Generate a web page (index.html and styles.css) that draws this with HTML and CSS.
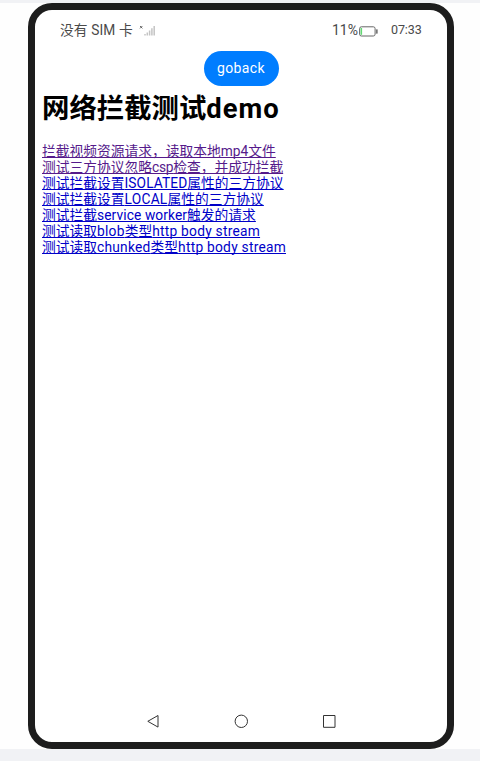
FILE: index.html
```html
<!DOCTYPE html>
<html lang="zh-CN">
<head>
<meta charset="utf-8">
<title>网络拦截测试demo</title>
<link rel="stylesheet" href="styles.css">
</head>
<body>
<main class="stage">
  <div class="phone">
    <header class="status">
      <span class="carrier">没有 SIM 卡</span>
      <svg class="signal" width="17" height="12" viewBox="0 0 17 12">
        <path d="M1 1l2.400 2.400M3.400 1L1 3.400" stroke="#555" stroke-width=".9"/>
        <path d="M6 9v1.500M8.300 7.500v3M10.600 5.500v5M12.900 3.300v7.200M15.200 1v9.500" stroke="#c4c4c4" stroke-width="1.500"/>
      </svg>
      <span class="percent">11%</span>
      <svg class="battery" width="20" height="11" viewBox="0 0 20 11">
        <rect x=".6" y=".8" width="15.500" height="9.200" rx="1.800" fill="none" stroke="#666" stroke-width="1"/>
        <rect x="1.500" y="2" width="1.600" height="6.800" fill="#62d873"/>
        <rect x="17" y="3.200" width="1.700" height="4.500" rx=".6" fill="#777"/>
      </svg>
      <time class="clock">07:33</time>
    </header>
    <button class="goback">goback</button>
    <section class="page">
      <h1>网络拦截测试<span class="title-latin">demo</span></h1>
      <nav class="links">
        <a class="visited">拦截视频资源请求，读取本地mp4文件</a>
        <a class="visited">测试三方协议忽略<span class="csp">csp</span>检查，并成功拦截</a>
        <a>测试拦截设置<span class="worker">ISOLATED</span>属性的三方协议</a>
        <a>测试拦截设置<span class="wide">LOCAL</span>属性的三方协议</a>
        <a>测试拦截<span class="worker">service worker</span>触发的请求</a>
        <a>测试读取<span class="wide">blob</span>类型<span class="wide">http body stream</span></a>
        <a>测试读取<span class="wide">chunked</span>类型<span class="wide">http body stream</span></a>
      </nav>
    </section>
    <footer class="navbar">
      <svg width="14" height="14" viewBox="0 0 14 14"><path d="M1.800 7.300L12 1.500V13.100Z"/></svg>
      <svg width="14" height="14" viewBox="0 0 14 14"><circle cx="7.300" cy="7.300" r="6.200"/></svg>
      <svg width="14" height="14" viewBox="0 0 14 14"><path d="M1.500 1.500H13V13.300H1.500Z"/></svg>
    </footer>
  </div>
</main>
</body>
</html>
```
FILE: styles.css
```css
* { box-sizing: border-box; }
body {
  margin: 0;
  height: 761px;
  padding: 3px 0 12px;
  background: #f1f2f5;
  font-family: Roboto, "Noto Sans CJK SC", sans-serif;
}
.stage { height: 746px; padding-left: 28px; background: #fefefe; }
.phone {
  width: 426px;
  height: 746px;
  display: flex;
  flex-direction: column;
  border: 7px solid #1d1d1d;
  border-radius: 24px;
  background: #fff;
}
.status {
  height: 41px;
  padding: 0 25px 1px;
  display: flex;
  align-items: center;
  color: #4a4a4a;
  font-size: 13.75px;
  line-height: 20px;
  white-space: nowrap;
}
.carrier { width: 79px; letter-spacing: .1px; }
.signal, .battery { position: relative; top: 1px; }
.percent { margin-left: auto; font-size: 14px; width: 27px; }
.clock { margin-left: 12px; width: 31px; font-size: 12.5px; letter-spacing: -.1px; }
.goback {
  align-self: center;
  width: 75px;
  height: 35px;
  padding: 0 0 1px;
  border: 0;
  border-radius: 18px;
  background: #007dff;
  color: #fff;
  font: 400 14px/33px Roboto, sans-serif;
  letter-spacing: .35px;
}
.page { flex: 1; padding-left: 7px; }
h1 { margin: 7px 0 18px; font-size: 27.4px; line-height: 32px; font-weight: 700; white-space: nowrap; }
.title-latin { letter-spacing: 1px; }
.links { display: flex; flex-direction: column; align-items: flex-start; }
.links a {
  height: 16px;
  font-size: 13.75px;
  line-height: 16px;
  color: #0000c8;
  text-decoration: underline 1px;
  text-underline-offset: 1px;
  text-decoration-skip-ink: none;
  white-space: nowrap;
}
.links .visited { color: #551a8b; }
.csp { letter-spacing: -.3px; }
.worker { letter-spacing: .1px; }
.wide { letter-spacing: .25px; }
.navbar { height: 42px; display: flex; justify-content: center; align-items: center; gap: 74px; }
.navbar svg { fill: none; stroke: #333; stroke-width: 1; }
```
